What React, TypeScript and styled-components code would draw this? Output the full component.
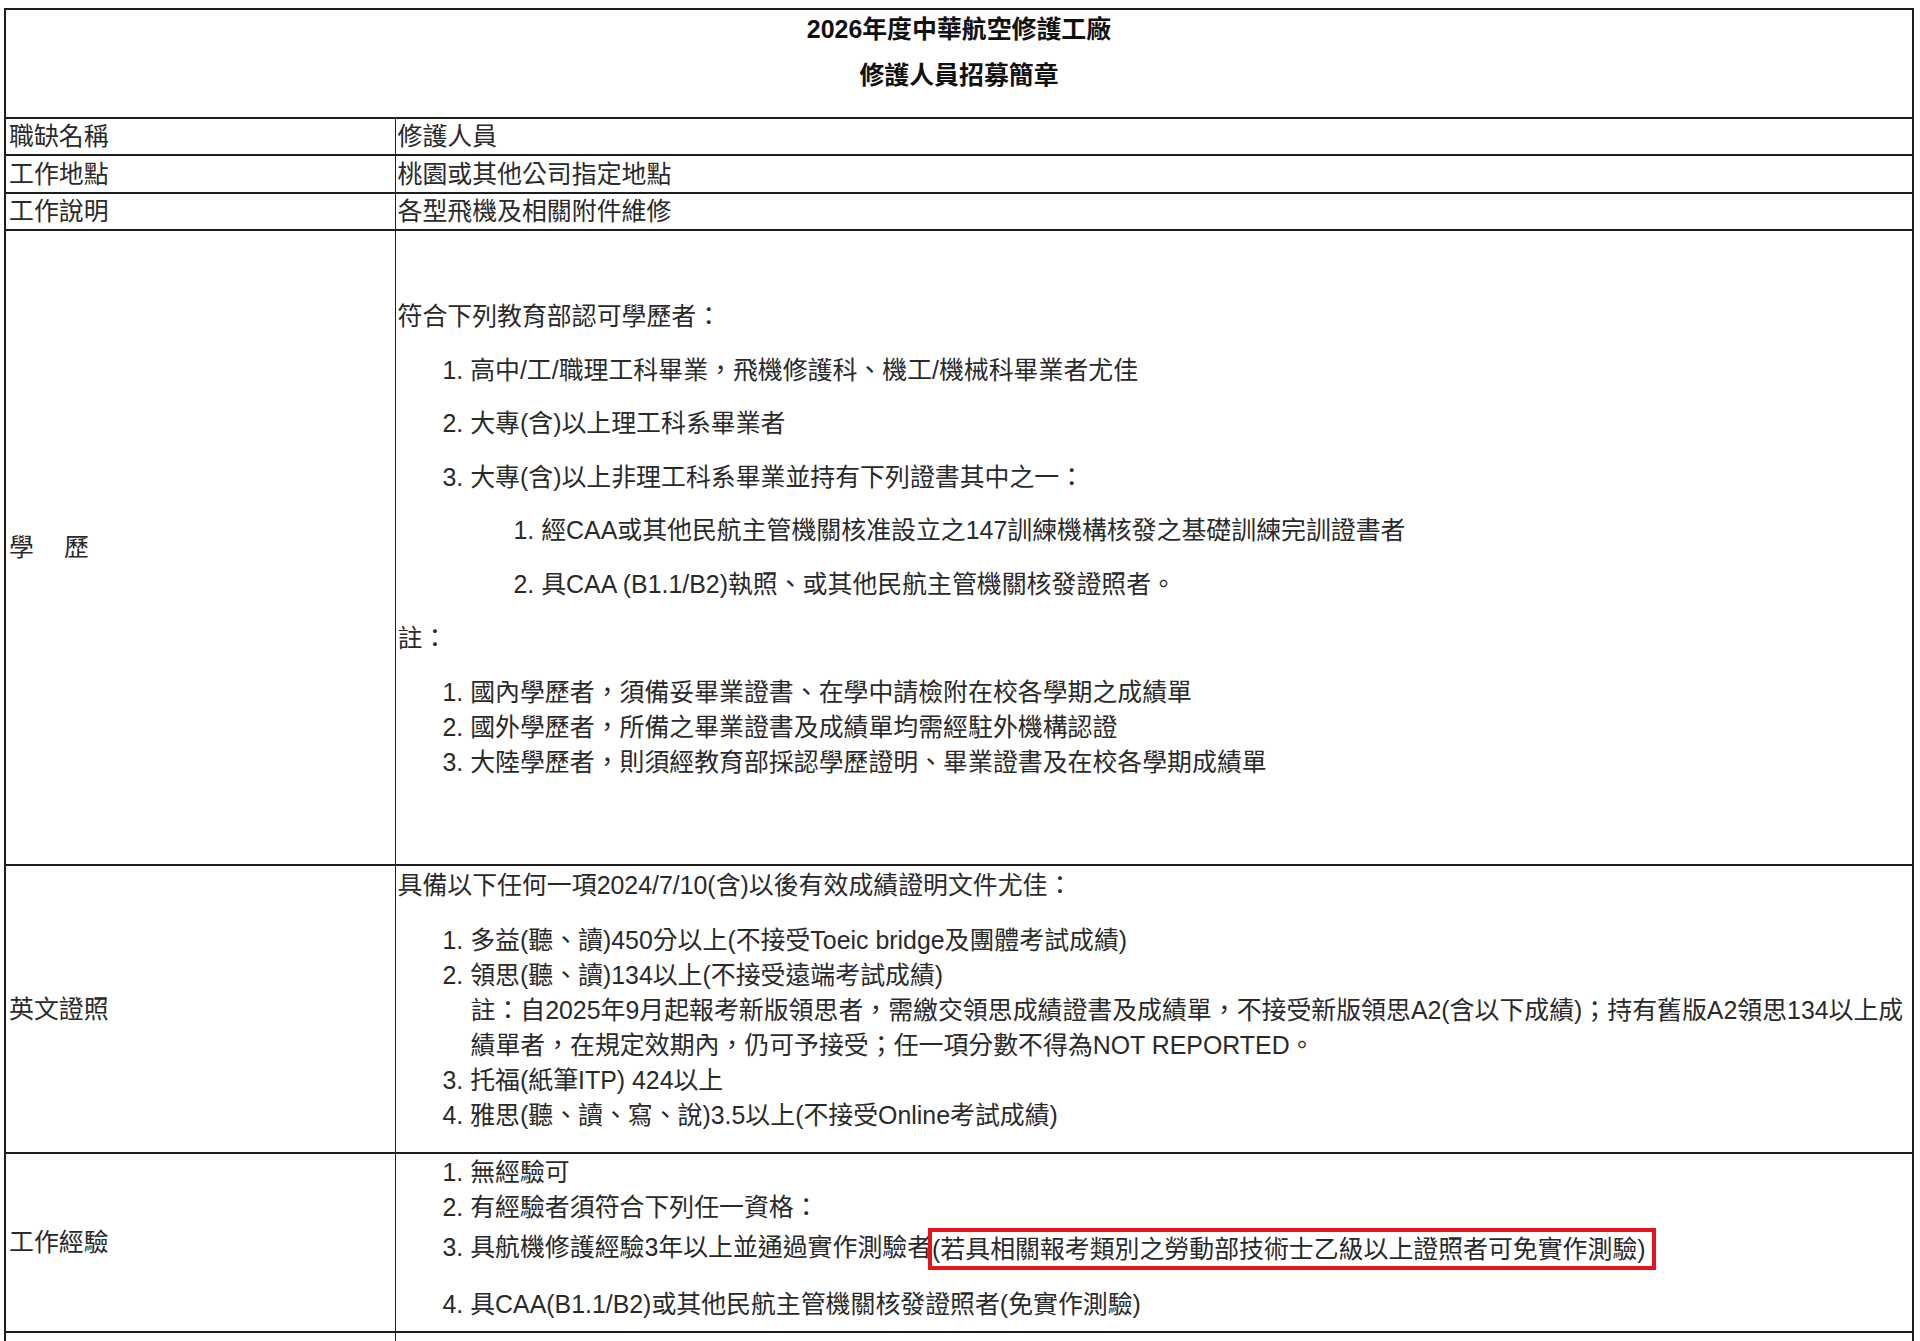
import React from 'react';
import styled, { createGlobalStyle } from "styled-components";

const GlobalStyle = createGlobalStyle`
  html, body {
    margin: 0;
    padding: 0;
    background: #ffffff;
  }
`

const Page = styled.div`
  padding: 8px 6px 0 4px;
  font-family: "Liberation Sans", "Noto Sans CJK TC", sans-serif;
  font-size: 24.9px;
  color: #2a2a2a;
`

const Table = styled.table`
  width: 100%;
  border-collapse: collapse;
  table-layout: fixed;
`

const Row = styled.tr<{ $h: number }>`
  height: ${p => p.$h}px;
`

const TitleCell = styled.td`
  border: 2px solid #1e1e1e;
  padding: 3px 0 0;
  vertical-align: top;
  text-align: center;
  font-weight: bold;
  color: #111;
`

const TitleLine = styled.div<{ $mt?: number }>`
  line-height: 32px;
  margin-top: ${p => p.$mt || 0}px;
`

const Label = styled.td`
  border: 2px solid #1e1e1e;
  border-right-width: 1px;
  padding: 0 3px;
  vertical-align: middle;
  white-space: nowrap;
  line-height: 35px;
`

const Cell = styled.td<{ $pt?: number; $top?: boolean }>`
  border: 2px solid #1e1e1e;
  border-left-width: 1px;
  padding: ${p => p.$pt || 0}px 2px 0 2px;
  vertical-align: ${p => (p.$top ? 'top' : 'middle')};
  line-height: 35px;
`

const Line = styled.div<{ $indent?: number; $mt?: number }>`
  padding-left: ${p => p.$indent || 0}px;
  margin-top: ${p => p.$mt || 0}px;
  line-height: 35px;
  white-space: nowrap;
`

const Mark = styled.span`
  display: inline-block;
  line-height: 34px;
  border: 4px solid #e3141c;
  margin-left: -4px;
  padding: 0 6px 0 0;
  vertical-align: middle;
`

const Spread = styled.span`
  letter-spacing: 30px;
`

export default function App() {
  return (
    <Page>
      <GlobalStyle />
      <Table>
        <colgroup>
          <col style={{ width: 390 }} />
          <col />
        </colgroup>
        <tbody>
          <Row $h={109}>
            <TitleCell colSpan={2}>
              <TitleLine>2026年度中華航空修護工廠</TitleLine>
              <TitleLine $mt={14}>修護人員招募簡章</TitleLine>
            </TitleCell>
          </Row>
          <Row $h={37}>
            <Label>職缺名稱</Label>
            <Cell>修護人員</Cell>
          </Row>
          <Row $h={38}>
            <Label>工作地點</Label>
            <Cell>桃園或其他公司指定地點</Cell>
          </Row>
          <Row $h={37}>
            <Label>工作說明</Label>
            <Cell>各型飛機及相關附件維修</Cell>
          </Row>
          <Row $h={635}>
            <Label><Spread>學</Spread>歷</Label>
            <Cell $top $pt={68}>
              <Line>符合下列教育部認可學歷者：</Line>
              <Line $indent={45} $mt={18.6}>1. 高中/工/職理工科畢業，飛機修護科、機工/機械科畢業者尤佳</Line>
              <Line $indent={45} $mt={18.6}>2. 大專(含)以上理工科系畢業者</Line>
              <Line $indent={45} $mt={18.6}>3. 大專(含)以上非理工科系畢業並持有下列證書其中之一：</Line>
              <Line $indent={116} $mt={18.6}>1. 經CAA或其他民航主管機關核准設立之147訓練機構核發之基礎訓練完訓證書者</Line>
              <Line $indent={116} $mt={18.6}>2. 具CAA (B1.1/B2)執照、或其他民航主管機關核發證照者。</Line>
              <Line $mt={18.6}>註：</Line>
              <Line $indent={45} $mt={19}>1. 國內學歷者，須備妥畢業證書、在學中請檢附在校各學期之成績單</Line>
              <Line $indent={45}>2. 國外學歷者，所備之畢業證書及成績單均需經駐外機構認證</Line>
              <Line $indent={45}>3. 大陸學歷者，則須經教育部採認學歷證明、畢業證書及在校各學期成績單</Line>
            </Cell>
          </Row>
          <Row $h={288}>
            <Label>英文證照</Label>
            <Cell $top $pt={2}>
              <Line>具備以下任何一項2024/7/10(含)以後有效成績證明文件尤佳：</Line>
              <Line $indent={45} $mt={20}>1. 多益(聽、讀)450分以上(不接受Toeic bridge及團體考試成績)</Line>
              <Line $indent={45}>2. 領思(聽、讀)134以上(不接受遠端考試成績)</Line>
              <Line $indent={73}>註：自2025年9月起報考新版領思者，需繳交領思成績證書及成績單，不接受新版領思A2(含以下成績)；持有舊版A2領思134以上成</Line>
              <Line $indent={73}>績單者，在規定效期內，仍可予接受；任一項分數不得為NOT REPORTED。</Line>
              <Line $indent={45}>3. 托福(紙筆ITP) 424以上</Line>
              <Line $indent={45}>4. 雅思(聽、讀、寫、說)3.5以上(不接受Online考試成績)</Line>
            </Cell>
          </Row>
          <Row $h={179}>
            <Label>工作經驗</Label>
            <Cell $top $pt={1}>
              <Line $indent={45}>1. 無經驗可</Line>
              <Line $indent={45}>2. 有經驗者須符合下列任一資格：</Line>
              <Line $indent={45} $mt={3}>
                3. 具航機修護經驗3年以上並通過實作測驗者<Mark>(若具相關報考類別之勞動部技術士乙級以上證照者可免實作測驗)</Mark>
              </Line>
              <Line $indent={45} $mt={17}>4. 具CAA(B1.1/B2)或其他民航主管機關核發證照者(免實作測驗)</Line>
            </Cell>
          </Row>
          <Row $h={60}>
            <Label />
            <Cell />
          </Row>
        </tbody>
      </Table>
    </Page>
  );
}
